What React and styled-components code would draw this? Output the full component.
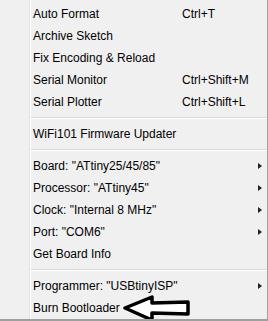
import React from 'react';
import styled, {createGlobalStyle} from 'styled-components';

const GlobalStyle = createGlobalStyle`
    body{
        margin: 0;
        background: #f0f0f0;
        font-family: "Liberation Sans", Arial, sans-serif;
    }
`

const Menu = styled.div`
    position: relative;
    width: 268px;
    height: 321px;
    box-sizing: border-box;
    display: flex;
    background: #f0f0f0;
    border-right: 1px solid #a0a0a0;
    border-bottom: 2px solid #a0a0a0;
    overflow: hidden;
`

const Gutter = styled.div`
    width: 29px;
    flex-shrink: 0;
    border-right: 1px solid #e2e3e3;
`

const List = styled.div`
    flex: 1;
    border-left: 1px solid #ffffff;
    padding-top: 3px;
`

const Item = styled.div`
    height: 22px;
    display: flex;
    align-items: center;
    padding-left: 2px;
    padding-right: 5px;
    font-size: 12px;
    color: #000;
    white-space: nowrap;
`

const Label = styled.span`
    width: 149px;
    flex-shrink: 0;
`

const Shortcut = styled.span`
    flex: 1;
`

const SubArrow = styled.span`
    margin-left: auto;
    width: 0;
    height: 0;
    border-top: 3.5px solid transparent;
    border-bottom: 3.5px solid transparent;
    border-left: 4px solid #222;
`

const Separator = styled.div`
    height: 10px;
    display: flex;
    align-items: center;
    padding-right: 1px;

    &::after{
        content: '';
        flex: 1;
        height: 1px;
        background: #d7d7d7;
        border-bottom: 1px solid #ffffff;
    }
`

const Pointer = styled.svg`
    position: absolute;
    left: 122px;
    top: 295px;
`

const items = [
    {label: 'Auto Format', key: 'Ctrl+T'},
    {label: 'Archive Sketch'},
    {label: 'Fix Encoding & Reload'},
    {label: 'Serial Monitor', key: 'Ctrl+Shift+M'},
    {label: 'Serial Plotter', key: 'Ctrl+Shift+L'},
    'sep',
    {label: 'WiFi101 Firmware Updater'},
    'sep',
    {label: 'Board: "ATtiny25/45/85"', sub: true},
    {label: 'Processor: "ATtiny45"', sub: true},
    {label: 'Clock: "Internal 8 MHz"', sub: true},
    {label: 'Port: "COM6"', sub: true},
    {label: 'Get Board Info'},
    'sep',
    {label: 'Programmer: "USBtinyISP"', sub: true},
    {label: 'Burn Bootloader'},
]

const App = () => {
    return(
        <>
            <GlobalStyle/>
            <Menu>
                <Gutter/>
                <List>
                    {items.map((item, i) => (
                        item === 'sep'
                            ? <Separator key={i}/>
                            : <Item key={i}>
                                <Label>{item.label}</Label>
                                {item.key && <Shortcut>{item.key}</Shortcut>}
                                {item.sub && <SubArrow/>}
                              </Item>
                    ))}
                </List>
                <Pointer width="70" height="28" viewBox="0 0 70 28">
                    <path d="M3 13 L30 2 L30 8 L66 7 L66 19 L30 18 L30 25 Z"
                        fill="#ffffff" stroke="#000" strokeWidth="3.5" strokeLinejoin="round"/>
                </Pointer>
            </Menu>
        </>
    )
}

export default App
